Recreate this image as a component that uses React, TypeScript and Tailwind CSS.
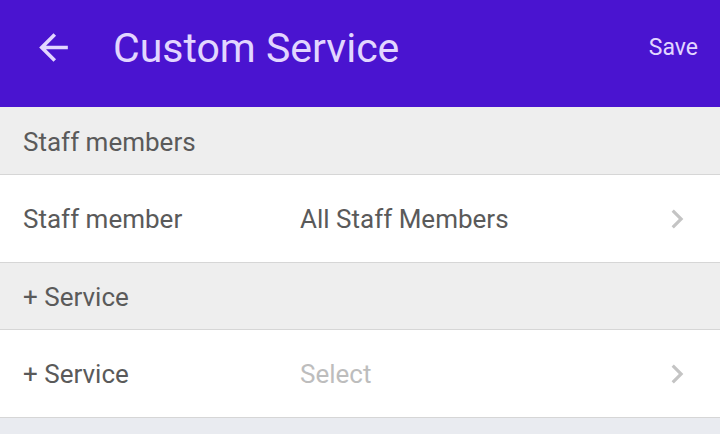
function Chevron() {
  return (
    <svg width="38" height="38" viewBox="0 0 24 24" fill="#c4c4c4">
      <path d="M10 6 8.59 7.41 13.17 12l-4.58 4.59L10 18l6-6z" />
    </svg>
  )
}

function SectionHeader({ label, h }: { label: string; h: string }) {
  return (
    <div className={`${h} flex items-center px-[23px] pt-[3px] bg-[#eeeeee] border-b border-[#d6d6d6] text-[26px] text-[#5a5a5a]`}>
      {label}
    </div>
  )
}

function Row({ label, value, placeholder }: { label: string; value: string; placeholder?: boolean }) {
  return (
    <div className="h-[88px] flex items-center pl-[23px] pr-[24px] bg-white border-b border-[#d6d6d6] text-[26px]">
      <span className="w-[277px] pt-[2px] text-[#5a5a5a]">{label}</span>
      <span className={`flex-1 pt-[2px] ${placeholder ? 'text-[#bdbdbd]' : 'text-[#5a5a5a]'}`}>{value}</span>
      <Chevron />
    </div>
  )
}

export default function App() {
  return (
    <div className="w-[720px] h-[434px] overflow-hidden bg-[#e9ebf0]" style={{ fontFamily: 'Roboto, "Noto Sans", sans-serif' }}>
      {/* App bar */}
      <div className="h-[107px] bg-[#4a14d0] flex items-center pl-[32px] pr-[22px] pb-[12px] text-[#e2d6ff]">
        <svg width="43" height="43" viewBox="0 0 24 24" fill="currentColor">
          <path d="M20 11H7.83l5.59-5.59L12 4l-8 8 8 8 1.41-1.41L7.83 13H20v-2z" />
        </svg>
        <h1 className="ml-[38px] pt-[2px] text-[41px] leading-none flex-1">Custom Service</h1>
        <button className="text-[23px] leading-none">Save</button>
      </div>

      <SectionHeader label="Staff members" h="h-[68px]" />
      <Row label="Staff member" value="All Staff Members" />
      <SectionHeader label="+ Service" h="h-[67px]" />
      <Row label="+ Service" value="Select" placeholder />
    </div>
  )
}
